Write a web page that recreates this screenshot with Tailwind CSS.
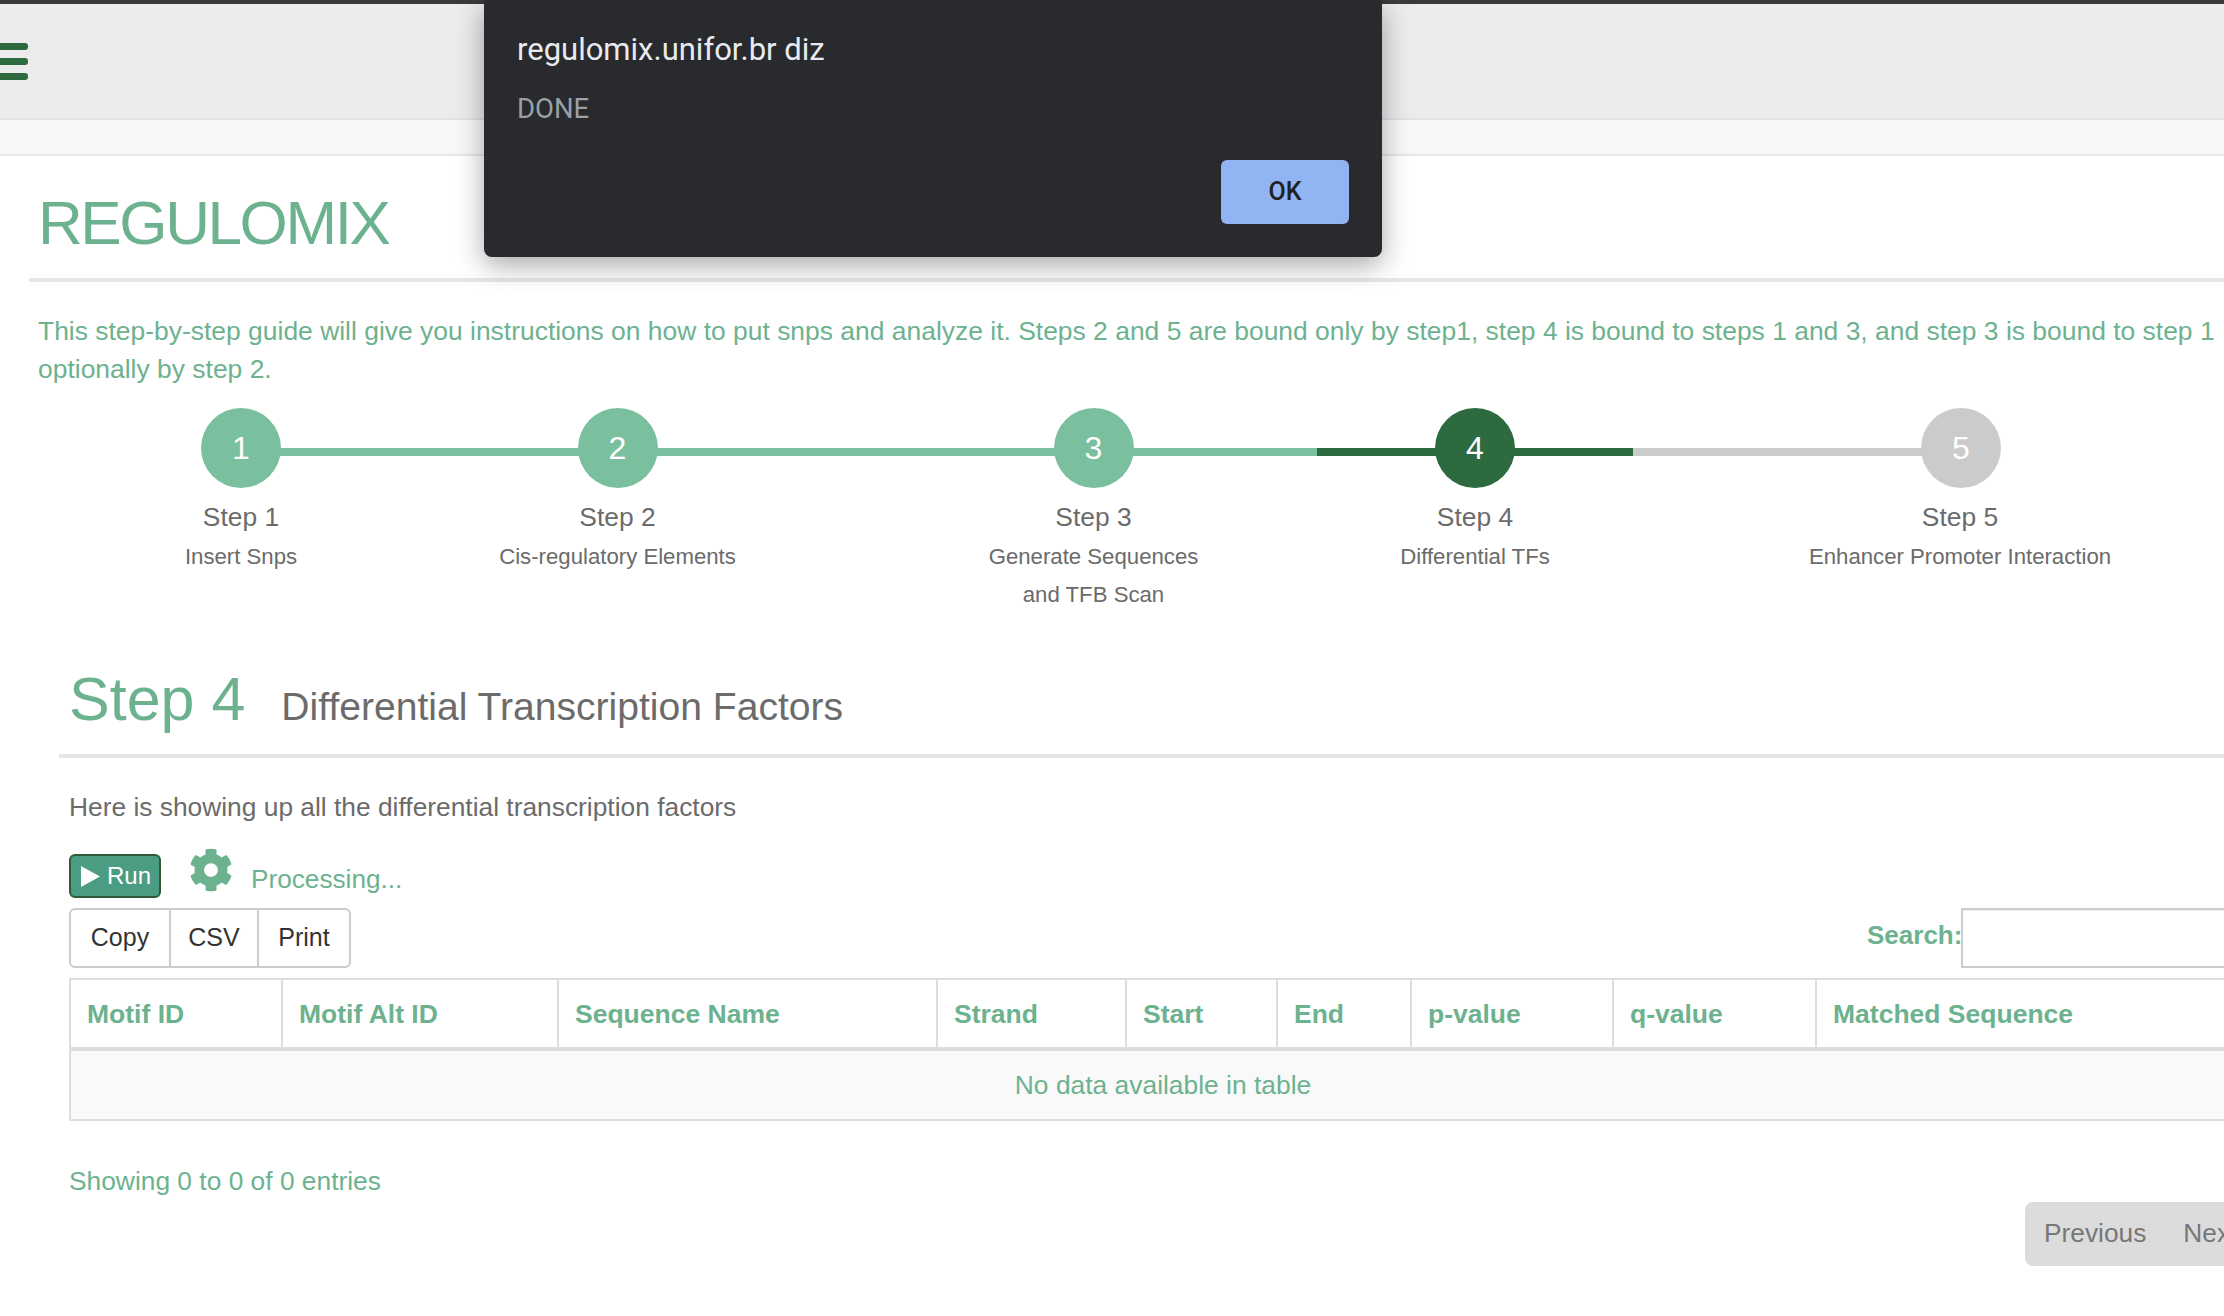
<!DOCTYPE html>
<html><head><meta charset="utf-8"><script src="https://cdn.jsdelivr.net/npm/@tailwindcss/browser@4"></script></head>
<body class="bg-white overflow-hidden">
<div class="relative w-[2224px] h-[1316px] overflow-hidden font-['Liberation_Sans',Arial,sans-serif] text-[#6db28f]">
  <div class="h-[4px] bg-[#3a3a3a]"></div>
  <nav class="h-[116px] bg-[#ececec] border-b-2 border-[#dfe1e5] flex items-center">
    <div class="flex flex-col gap-[8px] w-[28px]">
      <div class="h-[7px] rounded-r-[3px] bg-[#2d6a3f]"></div>
      <div class="h-[7px] rounded-r-[3px] bg-[#2d6a3f]"></div>
      <div class="h-[7px] rounded-r-[3px] bg-[#2d6a3f]"></div>
    </div>
  </nav>
  <div class="h-[36px] bg-[#f8f8f8] border-b-2 border-[#e7e7e7]"></div>
  <main class="w-[2400px] pl-[29px]">
    <header class="h-[126px] border-b-4 border-[#e5e6e9] pl-[9px] pt-[32px]">
      <h1 class="text-[62px] leading-[70px] tracking-[-2.4px]">REGULOMIX</h1>
    </header>
    <p class="pl-[9px] pt-[30px] text-[26.45px] leading-[38px] whitespace-nowrap">This step-by-step guide will give you instructions on how to put snps and analyze it. Steps 2 and 5 are bound only by step1, step 4 is bound to steps 1 and 3, and step 3 is bound to step 1<br>optionally by step 2.</p>
    <div class="flex pl-[88px] pt-[20px] h-[252px] text-[#6b6b6b] text-center">
      <div class="relative w-[248px]"><div class="absolute top-[40px] left-1/2 right-0 h-[8px] bg-[#7bc09e]"></div>
        <div class="relative mx-auto w-[80px] h-[80px] rounded-full bg-[#7bc09e] text-white text-[32px] leading-[80px]">1</div>
        <div class="text-[26.4px] leading-[38px] mt-[10px]">Step 1</div><div class="text-[22.2px] leading-[38px] mt-[2px]">Insert Snps</div></div>
      <div class="relative w-[505px]"><div class="absolute top-[40px] inset-x-0 h-[8px] bg-[#7bc09e]"></div>
        <div class="relative mx-auto w-[80px] h-[80px] rounded-full bg-[#7bc09e] text-white text-[32px] leading-[80px]">2</div>
        <div class="text-[26.4px] leading-[38px] mt-[10px]">Step 2</div><div class="text-[22.2px] leading-[38px] mt-[2px]">Cis-regulatory Elements</div></div>
      <div class="relative w-[447px]"><div class="absolute top-[40px] inset-x-0 h-[8px] bg-[#7bc09e]"></div>
        <div class="relative mx-auto w-[80px] h-[80px] rounded-full bg-[#7bc09e] text-white text-[32px] leading-[80px]">3</div>
        <div class="text-[26.4px] leading-[38px] mt-[10px]">Step 3</div><div class="text-[22.2px] leading-[38px] mt-[2px]">Generate Sequences<br>and TFB Scan</div></div>
      <div class="relative w-[316px]"><div class="absolute top-[40px] inset-x-0 h-[8px] bg-[#2d6a3f]"></div>
        <div class="relative mx-auto w-[80px] h-[80px] rounded-full bg-[#2d6a3f] text-white text-[32px] leading-[80px]">4</div>
        <div class="text-[26.4px] leading-[38px] mt-[10px]">Step 4</div><div class="text-[22.2px] leading-[38px] mt-[2px]">Differential TFs</div></div>
      <div class="relative w-[656px]"><div class="absolute top-[40px] left-0 right-1/2 h-[8px] bg-[#cbcbcb]"></div>
        <div class="relative mx-auto w-[80px] h-[80px] rounded-full bg-[#cbcbcb] text-white text-[32px] leading-[80px]">5</div>
        <div class="text-[26.4px] leading-[38px] mt-[10px] pr-[2px]">Step 5</div><div class="text-[22.2px] leading-[38px] mt-[2px] pr-[2px]">Enhancer Promoter Interaction</div></div>
    </div>
    <section class="pl-[40px] w-[2340px]">
      <div class="-ml-[10px] pl-[10px] h-[118px] pt-[24px] border-b-4 border-[#e5e6e9] flex items-baseline gap-[36px]">
        <h2 class="text-[61px] leading-[70px]">Step 4</h2>
        <span class="text-[39.1px] text-[#6b6b6b]">Differential Transcription Factors</span>
      </div>
      <p class="text-[26.35px] leading-[38px] mt-[30px] text-[#6b6b6b]">Here is showing up all the differential transcription factors</p>
      <div class="flex items-start mt-[28px] h-[54px]">
        <button class="flex items-center gap-[7px] w-[92px] h-[44px] pl-[10px] rounded-[6px] border-2 border-[#2f5a37] bg-[#4a9c82] text-white text-[24px] leading-none"><svg width="19" height="21" viewBox="0 0 19 21"><polygon points="0,0 19,10.5 0,21" fill="#fff"/></svg>Run</button>
        <svg class="ml-[28px] -mt-[6px]" width="44" height="44" viewBox="0 0 512 512"><path fill="#6db28f" d="M487.4 315.7l-42.6-24.6c4.3-23.2 4.3-47 0-70.2l42.6-24.6c4.9-2.8 7.1-8.6 5.5-14-11.1-35.6-30-67.8-54.7-94.6-3.8-4.1-10-5.1-14.8-2.3L380.8 110c-17.9-15.4-38.5-27.3-60.8-35.1V25.8c0-5.6-3.9-10.5-9.4-11.7-36.7-8.2-74.3-7.8-109.2 0-5.5 1.2-9.4 6.1-9.4 11.7V75c-22.2 7.9-42.8 19.8-60.8 35.1L88.7 85.5c-4.9-2.8-11-1.9-14.8 2.3-24.7 26.7-43.6 58.9-54.7 94.6-1.7 5.4.6 11.2 5.5 14L67.3 221c-4.3 23.2-4.3 47 0 70.2l-42.6 24.6c-4.9 2.8-7.1 8.6-5.5 14 11.1 35.6 30 67.8 54.7 94.6 3.8 4.1 10 5.1 14.8 2.3l42.6-24.6c17.9 15.4 38.5 27.3 60.8 35.1v49.2c0 5.6 3.9 10.5 9.4 11.7 36.7 8.2 74.3 7.8 109.2 0 5.5-1.2 9.4-6.1 9.4-11.7v-49.2c22.2-7.9 42.8-19.8 60.8-35.1l42.6 24.6c4.9 2.8 11 1.9 14.8-2.3 24.7-26.7 43.6-58.9 54.7-94.6 1.5-5.5-.7-11.3-5.6-14.1zM256 336c-44.1 0-80-35.9-80-80s35.9-80 80-80 80 35.9 80 80-35.9 80-80 80z"/></svg>
        <span class="ml-[18px] text-[26.2px] leading-[38px] mt-[6px]">Processing...</span>
      </div>
      <div class="flex justify-between items-start w-[2298px] h-[70px]">
        <div class="flex h-[60px] border-2 border-[#ccc] rounded-[6px] text-[25px] text-[#333] leading-[54px]">
          <div class="w-[100px] text-center border-r-2 border-[#ccc]">Copy</div>
          <div class="w-[88px] text-center border-r-2 border-[#ccc]">CSV</div>
          <div class="w-[90px] text-center">Print</div>
        </div>
        <div class="flex items-start h-[60px] w-[500px] text-[26px] font-bold leading-[55px]"><span class="w-[94px] shrink-0 whitespace-nowrap">Search:</span><div class="h-[60px] grow border-2 border-[#ccc] shadow-[inset_0_1px_1px_rgba(0,0,0,.075)]"></div></div>
      </div>
      <div class="w-[2188px] border-2 border-[#ddd]">
        <div class="grid grid-cols-[212px_276px_379px_189px_151px_134px_202px_203px_1fr] h-[71px] border-b-4 border-[#ddd] text-[26.5px] font-bold leading-[69px]">
          <div class="pl-[16px] border-r-2 border-[#ddd]">Motif ID</div>
          <div class="pl-[16px] border-r-2 border-[#ddd]">Motif Alt ID</div>
          <div class="pl-[16px] border-r-2 border-[#ddd]">Sequence Name</div>
          <div class="pl-[16px] border-r-2 border-[#ddd]">Strand</div>
          <div class="pl-[16px] border-r-2 border-[#ddd]">Start</div>
          <div class="pl-[16px] border-r-2 border-[#ddd]">End</div>
          <div class="pl-[16px] border-r-2 border-[#ddd]">p-value</div>
          <div class="pl-[16px] border-r-2 border-[#ddd]">q-value</div>
          <div class="pl-[16px]">Matched Sequence</div>
        </div>
        <div class="h-[68px] bg-[#f9f9f9] text-center text-[26.4px] leading-[68px]">No data available in table</div>
      </div>
      <p class="text-[26.35px] leading-[38px] mt-[41px]">Showing 0 to 0 of 0 entries</p>
      <div class="flex justify-end mt-[2px] w-[2188px]">
        <div class="flex h-[64px] w-[232px] rounded-[8px] bg-[#dcdcdc] text-[#777] text-[26.3px] leading-[62px] pl-[19px] gap-[37px]"><span>Previous</span><span>Next</span></div>
      </div>
    </section>
  </main>
  <div class="absolute left-[484px] top-0 w-[898px] h-[257px] rounded-b-[8px] bg-[#292a2d] shadow-[0_8px_28px_rgba(0,0,0,.35)] font-['Roboto',sans-serif]">
    <div class="absolute left-[33px] top-[32px] text-[31px] leading-[36px] text-[#e8eaed]">regulomix.unifor.br diz</div>
    <div class="absolute left-[33px] top-[94px] text-[27.5px] leading-[30px] text-[#9aa0a6]">DONE</div>
    <button class="absolute right-[33px] top-[160px] w-[128px] h-[64px] rounded-[6px] bg-[#91b4f3] text-[#202124] text-[25px] font-medium">OK</button>
  </div>
</div>
</body></html>
